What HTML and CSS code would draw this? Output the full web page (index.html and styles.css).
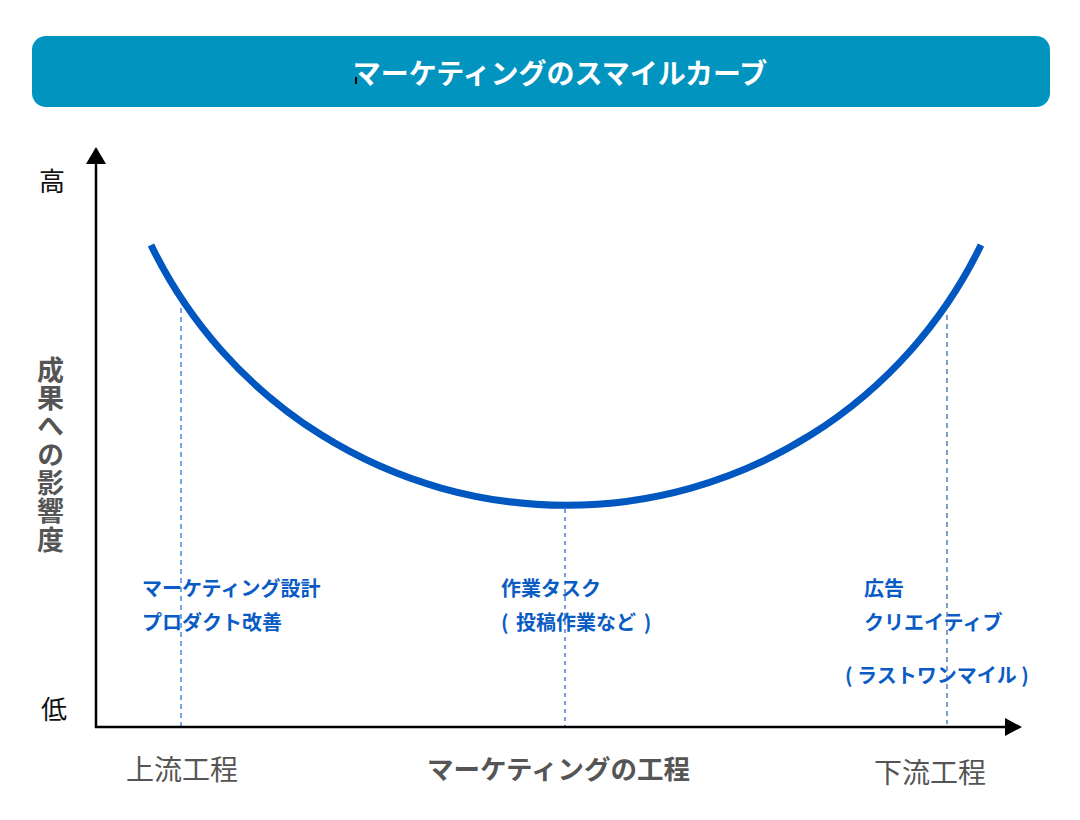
FILE: index.html
```html
<!DOCTYPE html>
<html lang="ja">
<head>
<meta charset="utf-8">
<title>マーケティングのスマイルカーブ</title>
<link rel="stylesheet" href="styles.css">
</head>
<body>
<header class="title-bar">
  <span class="caret"></span>
  <h1 class="title">マーケティングのスマイルカーブ</h1>
</header>
<main class="chart">
  <svg class="plot" viewBox="0 107 1080 713" width="1080" height="713" xmlns="http://www.w3.org/2000/svg">
    <line x1="181" y1="308" x2="181" y2="726" stroke="#6a9ee6" stroke-width="1.8" stroke-dasharray="5 4"/>
    <line x1="565" y1="509" x2="565" y2="726" stroke="#1c63cc" stroke-width="1.2" stroke-dasharray="4 4"/>
    <line x1="947" y1="315" x2="947" y2="724" stroke="#2a5fb0" stroke-width="1.2" stroke-dasharray="5 4"/>
    <path d="M151 245 A461 461 0 0 0 981 245" fill="none" stroke="#0057c0" stroke-width="7"/>
    <line x1="96" y1="160" x2="96" y2="728" stroke="#000" stroke-width="2.5"/>
    <line x1="95" y1="727" x2="1008" y2="727" stroke="#000" stroke-width="2.5"/>
    <polygon points="96,147 86,164 106,164" fill="#000"/>
    <polygon points="1022,727 1005,718 1005,736" fill="#000"/>
  </svg>

  <span class="axis-mark mark-high">高</span>
  <span class="axis-mark mark-low">低</span>
  <span class="y-title">成果への影響度</span>

  <div class="stage stage-up">
    <p>マーケティング設計</p>
    <p>プロダクト改善</p>
  </div>
  <div class="stage stage-mid">
    <p>作業タスク</p>
    <p>( 投稿作業など )</p>
  </div>
  <div class="stage stage-down">
    <p>広告</p>
    <p>クリエイティブ</p>
  </div>
  <div class="stage stage-last">
    <p>( ラストワンマイル )</p>
  </div>

  <span class="x-end x-up">上流工程</span>
  <span class="x-title">マーケティングの工程</span>
  <span class="x-end x-down">下流工程</span>
</main>
</body>
</html>
```

FILE: styles.css
```css
* {
  box-sizing: border-box;
}

html, body {
  margin: 0;
  padding: 0;
  background: #ffffff;
}

body {
  width: 1080px;
  height: 820px;
  overflow: hidden;
  font-family: "Noto Sans CJK JP", "Noto Sans", sans-serif;
}

.title-bar {
  position: relative;
  display: flex;
  align-items: center;
  justify-content: center;
  margin: 36px 30px 0 32px;
  height: 71px;
  padding-left: 38px;
  background: #0094bf;
  border-radius: 14px;
}

.title {
  margin: 0;
  font-size: 28px;
  line-height: 1;
  font-weight: 700;
  color: #ffffff;
}

.caret {
  position: absolute;
  left: 323px;
  top: 41px;
  width: 2px;
  height: 7px;
  background: #000000;
}

.chart {
  position: relative;
  width: 1080px;
  height: 713px;
}

.plot {
  position: absolute;
  left: 0;
  top: 0;
  display: block;
}

.axis-mark {
  position: absolute;
  font-size: 26px;
  line-height: 1;
  color: #111111;
}

.mark-high {
  left: 39px;
  top: 60px;
}

.mark-low {
  left: 41px;
  top: 588px;
}

.y-title {
  position: absolute;
  left: 37px;
  top: 249px;
  writing-mode: vertical-rl;
  text-orientation: upright;
  font-size: 27px;
  line-height: 1;
  letter-spacing: 1.3px;
  font-weight: 700;
  color: #555555;
}

.stage {
  position: absolute;
  color: #0a5cc4;
  font-size: 20px;
  font-weight: 700;
  line-height: 34px;
  white-space: nowrap;
}

.stage p {
  margin: 0;
}

.stage-up {
  left: 142px;
  top: 464px;
}

.stage-mid {
  left: 501px;
  top: 464px;
  word-spacing: 3px;
}

.stage-down {
  left: 864px;
  top: 464px;
}

.stage-last {
  left: 845px;
  top: 551px;
}

.x-end {
  position: absolute;
  font-size: 28px;
  line-height: 1;
  color: #555555;
}

.x-up {
  left: 126px;
  top: 647px;
}

.x-down {
  left: 874px;
  top: 650px;
}

.x-title {
  position: absolute;
  left: 427px;
  top: 648px;
  font-size: 26.5px;
  line-height: 1;
  font-weight: 700;
  color: #555555;
}
```
